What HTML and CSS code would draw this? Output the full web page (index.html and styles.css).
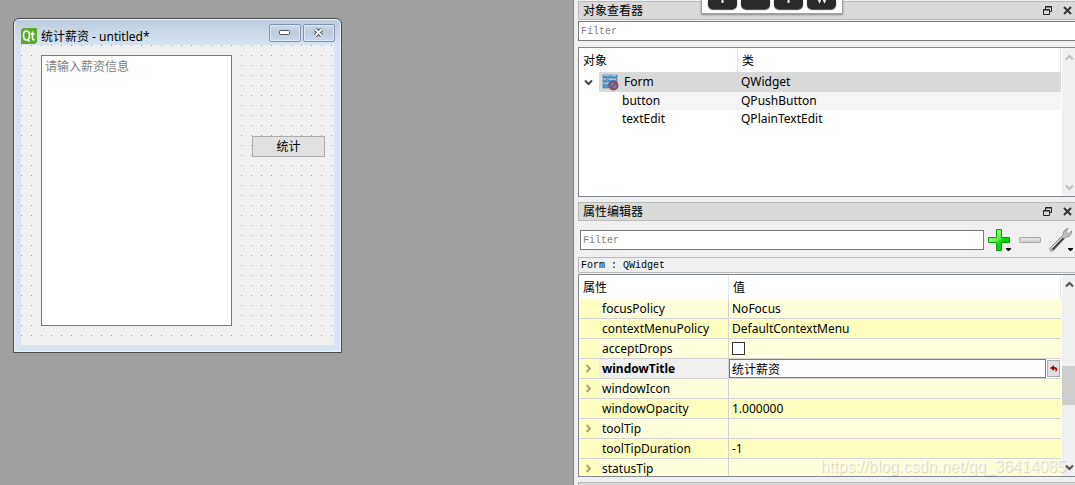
FILE: index.html
```html
<!DOCTYPE html>
<html lang="zh-CN">
<head>
<meta charset="utf-8">
<title>统计薪资 - untitled*</title>
<link rel="stylesheet" href="styles.css">
</head>
<body>
<svg class="defs" width="0" height="0" aria-hidden="true">
  <symbol id="float" viewBox="0 0 9 9"><path d="M2.500 3V.5H8.500V5.500H6.500M2 1H9M.5 3.500H6.500V8.500H.5ZM0 4H7" fill="none" stroke="#222" stroke-width="1"/></symbol>
  <symbol id="close" viewBox="0 0 9 9"><path d="M1 1L8 8M8 1L1 8" fill="none" stroke="#333" stroke-width="2"/></symbol>
  <symbol id="up" viewBox="0 0 9 7"><path d="M1 5.500L4.500 2L8 5.500" fill="none" stroke="currentColor" stroke-width="2"/></symbol>
  <symbol id="down" viewBox="0 0 9 7"><path d="M1 1.500L4.500 5L8 1.500" fill="none" stroke="currentColor" stroke-width="2"/></symbol>
  <symbol id="right" viewBox="0 0 7 9"><path d="M1.500 1L5 4.500L1.500 8" fill="none" stroke="currentColor" stroke-width="2"/></symbol>
</svg>
<div class="app">
  <main class="canvas">
    <section class="window">
      <header class="titlebar">
        <svg class="logo" viewBox="0 0 16 16" aria-hidden="true">
          <path d="M2 0H16V14L14 16H0V2Z" fill="#5caa2c"/>
          <path d="M5.500 3C3.300 3 2.500 4.800 2.500 7.500S3.300 12 5.500 12S8.500 10.200 8.500 7.500S7.700 3 5.500 3ZM6 11L8.500 13.500M11.500 3.500V10.500Q11.500 12 13.500 11.700M9.700 6H13.700" fill="none" stroke="#fff" stroke-width="1.600"/>
        </svg>
        <h1 class="title">统计薪资 - untitled*</h1>
        <button class="winbtn" type="button" aria-label="最小化"><svg width="12" height="6" viewBox="0 0 12 6"><rect x=".5" y=".5" width="10" height="4" rx="1" fill="#fff" stroke="#4d535c"/></svg></button>
        <button class="winbtn" type="button" aria-label="关闭"><svg width="12" height="10" viewBox="0 0 12 10"><path d="M2.500 1.500L8.500 7.500M8.500 1.500L2.500 7.500" stroke="#4d535c" stroke-width="4"/><path d="M2.500 1.500L8.500 7.500M8.500 1.500L2.500 7.500" stroke="#fff" stroke-width="2"/></svg></button>
      </header>
      <div class="form">
        <textarea class="salary" aria-label="薪资信息" placeholder="请输入薪资信息"></textarea>
        <button class="count" type="button">统计</button>
      </div>
    </section>
  </main>

  <aside class="docks">
    <div class="keys" aria-hidden="true">
      <span class="key"><svg viewBox="0 0 28 9"><path d="M14 0V3" stroke="#eee" stroke-width="2"/></svg></span>
      <span class="key"></span>
      <span class="key"><svg viewBox="0 0 28 9"><path d="M14 0V3" stroke="#eee" stroke-width="2"/></svg></span>
      <span class="key"><svg viewBox="0 0 28 9"><path d="M11 0L12 2L13 0M16 0L17 2L18 0" fill="none" stroke="#eee" stroke-width="1.500"/></svg></span>
    </div>

    <section class="inspector">
      <header class="dockbar">
        <h2 class="docktitle">对象查看器</h2>
        <button class="dockbtn" type="button" aria-label="浮动"><svg><use href="#float"/></svg></button>
        <button class="dockbtn" type="button" aria-label="关闭"><svg><use href="#close"/></svg></button>
      </header>
      <input class="filter object-filter" type="text" placeholder="Filter" aria-label="对象过滤">
      <div class="view tree-view">
        <table class="grid tree">
          <colgroup><col class="c-arrow"><col class="c-arrow"><col class="c-object"><col></colgroup>
          <thead><tr><th colspan="3">对象</th><th>类</th></tr></thead>
          <tbody>
            <tr class="selected">
              <td class="arrow"><svg class="icon-h"><use href="#down"/></svg></td>
              <td class="shade" colspan="2"><span class="object">
                <svg class="formicon" viewBox="0 0 17 17" aria-hidden="true">
                  <g fill="#4b9ed6" stroke="#326f9f" stroke-width=".6"><rect x="1" y="1" width="7" height="3"/><rect x="9" y="1" width="6" height="3"/><rect x="1" y="5" width="4" height="3"/><rect x="6" y="5" width="9" height="3"/><rect x="1" y="9" width="6" height="5"/></g>
                  <path d="M1.500 1.500H7M9.500 1.500H14M1.500 5.500H4M6.500 5.500H14M1.500 9.500H6" stroke="#91cff0"/>
                  <circle cx="11.500" cy="11.500" r="4" fill="#6787b1" stroke="#93465f" stroke-width="2"/><path d="M9 14L14 9" stroke="#93465f" stroke-width="1.600"/>
                </svg>Form</span></td>
              <td class="shade">QWidget</td>
            </tr>
            <tr class="child alt"><td colspan="2"></td><td class="shade name">button</td><td class="shade">QPushButton</td></tr>
            <tr class="child"><td colspan="2"></td><td class="name">textEdit</td><td>QPlainTextEdit</td></tr>
          </tbody>
        </table>
        <div class="scroll idle"><svg class="icon-h"><use href="#up"/></svg><svg class="icon-h"><use href="#down"/></svg></div>
      </div>
    </section>

    <section class="editor">
      <header class="dockbar">
        <h2 class="docktitle">属性编辑器</h2>
        <button class="dockbtn" type="button" aria-label="浮动"><svg><use href="#float"/></svg></button>
        <button class="dockbtn" type="button" aria-label="关闭"><svg><use href="#close"/></svg></button>
      </header>
      <div class="tools">
        <input class="filter" type="text" placeholder="Filter" aria-label="属性过滤">
        <button class="tool" type="button" aria-label="添加"><svg viewBox="0 0 26 26">
          <defs><linearGradient id="g" x1="0" y1="0" x2="1" y2="1"><stop offset="0" stop-color="#c4ffad"/><stop offset=".45" stop-color="#65ee4c"/><stop offset=".6" stop-color="#00da00"/><stop offset="1" stop-color="#13c513"/></linearGradient></defs>
          <path d="M10.500 2.500H15.500V10.500H23.500V15.500H15.500V23.500H10.500V15.500H2.500V10.500H10.500Z" fill="url(#g)" stroke="#0b9e0b" stroke-linejoin="round"/><path d="M20 21H25V22L23 24H22L20 22Z" fill="#000"/></svg></button>
        <button class="tool" type="button" aria-label="删除"><svg viewBox="0 0 26 26">
          <rect x="2.500" y="10.500" width="21" height="5" rx="1" fill="#d4d4d4" stroke="#a5a5a5"/><path d="M4 12H22" stroke="#ededed"/></svg></button>
        <button class="tool" type="button" aria-label="配置"><svg viewBox="0 0 26 26">
          <path d="M15 8C15 4 17 2 20 1.500L18 5L20 7L23.500 4C24 8 21 10 18 10L6 23Q3 26 2 23Q1 21 4 19Z" fill="#bfbfbf" stroke="#858585" stroke-width=".8"/><path d="M15.500 11L4.500 22.500" stroke="#454545" stroke-width="2"/><path d="M15 9.500L3.500 21.500" stroke="#e9e9e9"/><path d="M20 21H25V22L23 24H22L20 22Z" fill="#000"/></svg></button>
      </div>
      <p class="subject">Form : QWidget</p>
      <div class="view prop-view">
        <table class="grid props">
          <colgroup><col class="c-arrow"><col class="c-prop"><col></colgroup>
          <thead><tr><th colspan="2">属性</th><th>值</th></tr></thead>
          <tbody>
            <tr><td></td><td>focusPolicy</td><td>NoFocus</td></tr>
            <tr><td></td><td>contextMenuPolicy</td><td>DefaultContextMenu</td></tr>
            <tr><td></td><td><label for="drops">acceptDrops</label></td><td><input class="check" id="drops" type="checkbox"></td></tr>
            <tr class="current"><td class="arrow"><svg class="icon-v"><use href="#right"/></svg></td><td><label for="wtitle">windowTitle</label></td>
              <td class="editing"><div class="edit"><input class="value" id="wtitle" type="text" value="统计薪资"><button class="reset" type="button" aria-label="重置"><svg viewBox="0 0 8 8"><path d="M4 0V2C7 2 8 4 7 5.500L5.500 7V5.500C6 4.500 5 4 4 4V6L0 3Z" fill="#9d0d0d"/></svg></button></div></td></tr>
            <tr><td class="arrow"><svg class="icon-v"><use href="#right"/></svg></td><td>windowIcon</td><td></td></tr>
            <tr><td></td><td>windowOpacity</td><td>1.000000</td></tr>
            <tr><td class="arrow"><svg class="icon-v"><use href="#right"/></svg></td><td>toolTip</td><td></td></tr>
            <tr><td></td><td>toolTipDuration</td><td>-1</td></tr>
            <tr><td class="arrow"><svg class="icon-v"><use href="#right"/></svg></td><td>statusTip</td><td></td></tr>
          </tbody>
        </table>
        <div class="scroll"><svg class="icon-h"><use href="#up"/></svg><span class="track"><span class="thumb"></span></span><svg class="icon-h"><use href="#down"/></svg></div>
      </div>
    </section>
    <div class="nextdock"></div>
    <div class="watermark">https://blog.csdn.net/qq_36414085</div>
  </aside>
</div>
</body>
</html>
```
FILE: styles.css
```css
* { box-sizing: border-box; }
body {
  margin: 0;
  font: 12px/18px "Noto Sans", "Noto Sans CJK SC", sans-serif;
  color: #000;
}
button, input, textarea { font: inherit; color: inherit; margin: 0; }
button { padding: 0; }
h1, h2, p { margin: 0; font-size: 12px; font-weight: 400; }
svg { display: block; flex: none; }
.defs { position: absolute; }
.app { display: flex; height: 100vh; overflow: hidden; }

/* design canvas */
.canvas { flex: 1; min-width: 0; padding: 18px 13px; background: #a0a0a0; }
.window {
  width: 329px;
  padding: 0 6px 7px;
  border: 1px solid #4a4a4a;
  border-radius: 6px 6px 0 0;
  box-shadow: inset 0 0 0 1px #eaf3fb;
  background: linear-gradient(#bccbdc, #d7e4f2 26px);
}
.titlebar { display: flex; height: 26px; padding: 4px 0 0 1px; gap: 2px; }
.logo { width: 16px; height: 16px; margin: 5px 2px 0 0; }
.title { flex: 1; padding-top: 5px; }
.winbtn {
  display: grid;
  place-items: center;
  width: 32px;
  height: 18px;
  margin-top: 1px;
  border: 1px solid #8391ab;
  border-radius: 2px;
  box-shadow: inset 0 0 0 1px #dce8f5;
  background: linear-gradient(#c9d7e7, #bccbdd 50%, #c8d8ea);
}
.form {
  display: flex;
  align-items: flex-start;
  justify-content: space-between;
  height: 300px;
  margin: 0 1px;
  padding: 10px 9px 0 20px;
  background: conic-gradient(from 0deg at 1px 1px, #f0f0f0 270deg, #a0a0a0 0) 0 0 / 10px 10px;
}
.salary {
  width: 191px;
  height: 271px;
  padding: 2px 3px;
  border: 1px solid #7a7a7a;
  border-radius: 0;
  outline: 0;
  resize: none;
  background: #fff;
}
.salary::placeholder { color: #808080; }
.count {
  width: 73px;
  height: 21px;
  margin-top: 81px;
  padding-top: 1px;
  border: 1px solid #adadad;
  background: #e1e1e1;
}

/* docks */
.docks {
  position: relative;
  display: flex;
  flex-direction: column;
  width: 502px;
  flex: none;
  padding: 1px 0 0 4px;
  border-left: 1px solid #828282;
  background: #f0f0f0;
}
.inspector { margin-bottom: 5px; }
.editor { display: flex; flex: 1; flex-direction: column; min-height: 0; }
.dockbar {
  display: flex;
  align-items: center;
  height: 19px;
  padding: 0 3px 0 4px;
  gap: 11px;
  border: 1px solid #bababa;
  border-right: 0;
  background: #dadada;
}
.docktitle { flex: 1; padding-top: 1px; }
.dockbtn { width: 9px; height: 9px; border: 0; background: none; }
.dockbtn svg { width: 9px; height: 9px; }
.filter {
  flex: 1;
  min-width: 0;
  height: 20px;
  padding: 0 2px;
  border: 1px solid #7a7a7a;
  background: #fff;
  font: 10px/18px "Liberation Mono", monospace;
}
.filter::placeholder { color: #808080; }
.object-filter { display: block; width: 100%; margin: 1px 0 6px; border-right: 0; }
.view {
  display: flex;
  justify-content: space-between;
  border: 1px solid #828790;
  border-right: 0;
  background: #fff;
  overflow: hidden;
}
.tree-view { height: 150px; }
.prop-view { flex: 1; min-height: 0; }
.grid {
  flex: 1;
  height: max-content;
  margin-right: 1px;
  border-collapse: separate;
  border-spacing: 0;
  table-layout: fixed;
}
.grid th {
  height: 24px;
  padding: 2px 4px 0;
  border-right: 1px solid #e5e5e5;
  text-align: left;
  font-weight: 400;
}
.grid td { height: 20px; padding: 0 3px; line-height: 18px; white-space: nowrap; }
.c-arrow { width: 20px; }
.c-object { width: 119px; }
.c-prop { width: 130px; }
.grid .arrow { padding: 0 5px; color: #444; }
.icon-h { width: 9px; height: 7px; }
.icon-v { width: 7px; height: 9px; margin-left: 1px; }
.tree .child td { height: 18px; }
.tree .selected .shade { background: #d9d9d9; }
.tree .alt .shade { background: #f5f5f5; }
.object { display: flex; align-items: center; gap: 5px; }
.formicon { width: 17px; height: 17px; }
.props td { border-bottom: 1px solid #d4d4d4; background: #ffffdc; }
.props tr:nth-child(even) td, .props td:first-child { background: #ffffbf; }
.props td:nth-child(2) { border-right: 1px solid #d4d4d4; }
.props .arrow { color: #a6a67c; }
.props .current td:nth-child(2) { background: #f0f0f0; font-weight: 700; }
.props .current .editing { padding: 0; background: #fff; }
.check {
  display: block;
  width: 13px;
  height: 13px;
  appearance: none;
  border: 1px solid #333;
  background: #fff;
}
.edit { display: flex; align-items: center; gap: 1px; padding-right: 1px; }
.value {
  flex: 1;
  min-width: 0;
  height: 19px;
  padding: 0 2px;
  border: 1px solid #7a7a7a;
  background: #fff;
}
.reset {
  display: grid;
  place-items: center;
  width: 13px;
  height: 17px;
  border: 1px solid #adadad;
  background: #e1e1e1;
}
.reset svg { width: 8px; height: 8px; }
.tools { display: flex; align-items: center; gap: 5px; height: 36px; padding: 2px 1px 0 2px; }
.tool { width: 26px; height: 26px; border: 0; background: none; }
.tool svg { width: 26px; height: 26px; }
.tools .filter + .tool { margin-left: -3px; }
.subject {
  height: 16px;
  margin-bottom: 1px;
  padding: 1px 2px 0;
  border: 1px solid #bababa;
  border-right: 0;
  font: 10px/14px "Liberation Mono", monospace;
}
.scroll {
  display: flex;
  flex-direction: column;
  justify-content: space-between;
  width: 13px;
  padding: 6px 0 5px;
  background: #f0f0f0;
  color: #505050;
}
.scroll .icon-h { margin-left: 3px; }
.scroll.idle { color: #bfbfbf; }
.track { flex: 1; padding-top: 78px; }
.thumb { display: block; height: 39px; background: #cdcdcd; }
.nextdock { height: 3px; margin-top: 5px; border: 1px solid #bababa; border-width: 1px 0 0 1px; background: #dadada; }

/* overlays */
.keys {
  position: absolute;
  top: 0;
  left: 127px;
  display: flex;
  gap: 4px;
  width: 142px;
  height: 14px;
  padding: 0 6px;
  border: 1px solid #a0a0a0;
  border-top: 0;
  background: #fff;
  box-shadow: 0 1px 2px #888;
}
.key { flex: 1; height: 9px; border-radius: 0 0 5px 5px; background: #2a2a2a; box-shadow: 0 1px 1px #444; }
.key svg { width: 100%; height: 9px; }
.watermark {
  position: absolute;
  right: 9px;
  bottom: 9px;
  font: 16px/18px "Liberation Sans", sans-serif;
  color: rgba(255, 255, 255, .7);
  text-shadow: 1px 1px 1px rgba(120, 120, 120, .35);
  pointer-events: none;
}
```
